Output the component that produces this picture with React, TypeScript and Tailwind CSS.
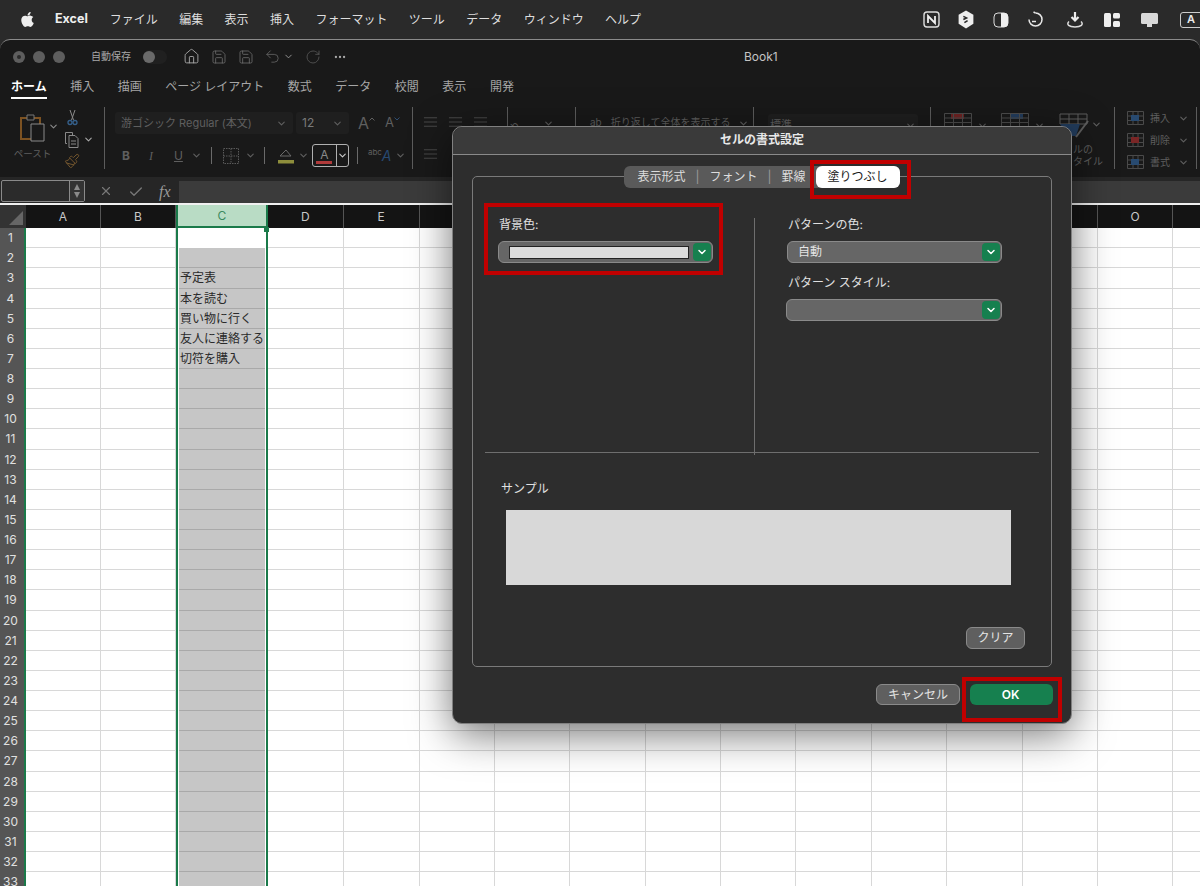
import { ChevronDown, Check, Ellipsis, House, Paintbrush, RotateCw, Save, Undo2, X } from "lucide-react";
import { FaApple } from "react-icons/fa";

const font = "font-['Inter','Noto_Sans_CJK_JP',sans-serif]";
const menus = ["ファイル", "編集", "表示", "挿入", "フォーマット", "ツール", "データ", "ウィンドウ", "ヘルプ"];
const tabs = ["挿入", "描画", "ページ レイアウト", "数式", "データ", "校閲", "表示", "開発"];
const columns = ["A", "B", "C", "D", "E", "F", "G", "H", "I", "J", "K", "L", "M", "N", "O", ""];
const rows = Array.from({ length: 33 }, (_, i) => i + 1);
const cellText: Record<number, string> = { 3: "予定表", 4: "本を読む", 5: "買い物に行く", 6: "友人に連絡する", 7: "切符を購入" };

function MenuBar() {
  return (
    <div className="flex h-[39px] items-center bg-[#2a2a2a] pl-[19px] text-[12px] text-[#dedede]">
      <FaApple className="text-[17px] text-[#eeeeee]" />
      <span className="ml-[19px] text-[12.5px] font-bold text-[#eeeeee]">Excel</span>
      <div className="ml-[22px] flex gap-[21.4px]">
        {menus.map((m) => (
          <span key={m}>{m}</span>
        ))}
      </div>
      <StatusIcons />
    </div>
  );
}

function StatusIcons() {
  return (
    <div className="-mr-[12px] ml-auto flex items-center text-[#e8e8e8]">
      <svg className="h-[17px] w-[17px]" viewBox="0 0 17 17" fill="none">
        <rect x="1" y="1" width="15" height="15" rx="3" stroke="#dddddd" strokeWidth="1.4" />
        <path d="M5 12V5l7 7V5" stroke="#eeeeee" strokeWidth="1.8" />
      </svg>
      <svg className="ml-[17px] h-[19px] w-[18px]" viewBox="0 0 17 18">
        <path d="M8.5 .5 15.500 4.500v8.500l-7 4.500L1.500 13V4.500z" fill="#eeeeee" />
        <path d="M6 6l3 1.500L6 9m4 1-3 2" stroke="#2a2a2a" strokeWidth="1.500" fill="none" />
      </svg>
      <svg className="ml-[18px] h-[16px] w-[16px]" viewBox="0 0 16 16">
        <rect x="1" y="1" width="14" height="14" rx="4" fill="none" stroke="#dddddd" />
        <path d="M8 1h3a4 4 0 0 1 4 4v6a4 4 0 0 1-4 4H8z" fill="#eeeeee" />
      </svg>
      <svg className="ml-[18px] h-[17px] w-[17px]" viewBox="0 0 17 17" fill="none" stroke="#e8e8e8" strokeWidth="1.500">
        <path d="M8.500 2a6.500 6.500 0 1 1-6.500 6.500" />
        <path d="M8.500 2 6.500 1M5 10.500h4" />
      </svg>
      <svg className="ml-[22px] h-[18px] w-[18px]" viewBox="0 0 18 18" fill="none">
        <path d="M9 1v8M5.500 6 9 9.500 12.500 6" stroke="#eeeeee" strokeWidth="2.200" />
        <path d="M3 10.500c-3 3 0 5.500 6 5.500s9-2.500 6-5.500" stroke="#dddddd" strokeWidth="1.500" />
      </svg>
      <svg className="ml-[20px] h-[16px] w-[16px]" viewBox="0 0 16 16" fill="#eeeeee">
        <rect x="0" y="1" width="7" height="14" rx="1.500" />
        <rect x="9" y="1" width="7" height="5.500" rx="1.500" />
        <rect x="9" y="9" width="7" height="6" rx="1.500" />
      </svg>
      <svg className="ml-[21px] h-[16px] w-[17px]" viewBox="0 0 17 16" fill="#d8d8d8">
        <rect x="0" y="1" width="17" height="11" rx="1.500" />
        <rect x="6" y="12" width="5" height="3" />
      </svg>
      <span className="ml-[22px] flex h-[16px] w-[32px] items-center rounded-[3px] border border-[#cccccc] pl-[6px] text-[11px] font-semibold">
        A
      </span>
    </div>
  );
}

function TitleBar() {
  return (
    <div className="relative flex h-[33px] items-center pl-[13px] text-[#707070]">
      <span className="flex h-[12px] w-[12px] items-center justify-center rounded-full bg-[#5e5e5e]">
        <span className="h-[4px] w-[4px] rounded-full bg-[#2a2a2a]" />
      </span>
      <span className="ml-[8px] h-[12px] w-[12px] rounded-full bg-[#5e5e5e]" />
      <span className="ml-[8px] h-[12px] w-[12px] rounded-full bg-[#5e5e5e]" />
      <span className="ml-[26px] text-[10px] text-[#a8a8a8]">自動保存</span>
      <span className="ml-[12px] flex h-[14px] w-[24px] items-center rounded-full bg-[#202020]">
        <span className="h-[12px] w-[12px] rounded-full bg-[#6a6a6a]" />
      </span>
      <House className="ml-[16px] h-[17px] w-[17px] text-[#a8a8a8]" strokeWidth={1.3} />
      <Save className="ml-[11px] h-[16px] w-[16px]" strokeWidth={1.2} />
      <Save className="ml-[11px] h-[16px] w-[16px]" strokeWidth={1.2} />
      <Undo2 className="ml-[10px] h-[17px] w-[17px] text-[#5f5f5f]" strokeWidth={1.3} />
      <ChevronDown className="ml-[2px] h-[11px] w-[11px] text-[#9a9a9a]" strokeWidth={2} />
      <RotateCw className="ml-[11px] h-[16px] w-[16px] text-[#5a5a5a]" strokeWidth={1.2} />
      <Ellipsis className="ml-[12px] h-[14px] w-[14px] text-[#a8a8a8]" />
      <span className="absolute left-[744px] text-[12px] text-[#c4c4c4]">Book1</span>
    </div>
  );
}

function RibbonTabs() {
  return (
    <div className="flex h-[33px] gap-[23.5px] pl-[11px] pt-[5px] text-[12px] text-[#a6a6a6]">
      <span className="h-[21px] border-b-[2px] border-white font-semibold text-white">ホーム</span>
      {tabs.map((t) => (
        <span key={t}>{t}</span>
      ))}
    </div>
  );
}

function Sep({ className }: { className: string }) {
  return <span className={`h-[17px] w-px bg-[#6a6a6a] ${className}`} />;
}

function Chev({ className = "text-[#a8a8a8]" }: { className?: string }) {
  return <ChevronDown className={`h-[11px] w-[11px] shrink-0 ${className}`} strokeWidth={2.4} />;
}

function Lines({ className }: { className: string }) {
  return (
    <svg className={className} viewBox="0 0 16 12" stroke="#4c4c4c" strokeWidth="1">
      <path d="M1 1.500h14M1 6h14M1 10.500h14" />
    </svg>
  );
}

function GridIcon({ fill, x }: { fill: string; x: number }) {
  return (
    <svg className="h-[14px] w-[28px]" viewBox="0 0 28 14" fill="none">
      <rect x={x} y="0" width="13" height="6" fill={fill} />
      <path d="M.5.5h27v13H.5zM.5 5h27M.5 9.500h27M9.500.5v13M18.500.5v13" stroke="#4c4c4c" />
    </svg>
  );
}

function Ribbon() {
  return (
    <div className="flex h-[71px] text-[#5f5f5f]">
      <div className="my-[1px] flex h-[62px] w-[105px] border-r border-[#5c5c5c] pl-[13px]">
        <div className="flex w-[35px] flex-col items-center">
          <svg className="mt-[5px] h-[30px] w-[30px] shrink-0" viewBox="0 0 30 30" fill="none">
            <path d="M5 6h19v21H5z" stroke="#7c5222" strokeWidth="2" />
            <path d="M11 3h7v5h-7z" stroke="#777777" fill="#191919" />
            <path d="M15 12h13v17H15z" stroke="#8a8a8a" fill="#191919" />
          </svg>
          <span className="mt-[5px] whitespace-nowrap pl-[4px] text-[9.5px]">ペースト</span>
        </div>
        <Chev className="mt-[14px] text-[#8a8a8a]" />
        <div className="ml-[5px] flex flex-col items-start gap-[5px] pt-[2px]">
          <svg className="h-[17px] w-[17px]" viewBox="0 0 17 17" fill="none">
            <path d="M6 1l3.500 10M11 1 7.500 11" stroke="#8a8a8a" />
            <circle cx="6" cy="13.500" r="2" stroke="#35608c" strokeWidth="1.300" />
            <circle cx="11" cy="13.500" r="2" stroke="#35608c" strokeWidth="1.300" />
          </svg>
          <div className="flex items-center gap-[2px]">
            <svg className="h-[17px] w-[17px]" viewBox="0 0 17 17" fill="none" stroke="#8a8a8a">
              <path d="M3 12.500H1.500v-11h7V4" />
              <path d="M5 4.500h6l3 3v9H5zM7 10h5M7 13h5" />
            </svg>
            <Chev />
          </div>
          <Paintbrush className="h-[16px] w-[16px] text-[#7a5a30]" strokeWidth={1.4} />
        </div>
      </div>

      <div className="my-[1px] flex h-[62px] w-[308px] flex-col border-r border-[#5c5c5c] pl-[10px]">
        <div className="mt-[5px] flex h-[22px] items-center">
          <div className="flex h-[22px] w-[178px] items-center justify-between rounded-[3px] bg-[#1f1f1f] px-[6px] text-[11px]">
            <span>游ゴシック Regular (本文)</span>
            <Chev className="text-[#5f5f5f]" />
          </div>
          <div className="ml-[3px] flex h-[22px] w-[53px] items-center justify-between rounded-[3px] bg-[#1f1f1f] px-[6px] text-[12px]">
            <span className="text-[#7a7a7a]">12</span>
            <Chev className="text-[#5f5f5f]" />
          </div>
          <span className="ml-[9px] text-[16px]">A</span>
          <svg className="mb-[8px] h-[4px] w-[6px]" viewBox="0 0 6 4" fill="none" stroke="#5f5f5f">
            <path d="M.5 3.500 3 1l2.500 2.500" />
          </svg>
          <span className="ml-[10px] text-[13px]">A</span>
          <svg className="mb-[8px] h-[4px] w-[6px]" viewBox="0 0 6 4" fill="none" stroke="#2f4d70">
            <path d="M.5.500 3 3l2.500-2.500" />
          </svg>
        </div>
        <div className="mt-[10px] flex h-[23px] items-center pl-[7px] text-[12px]">
          <span className="font-bold">B</span>
          <span className="ml-[19px] font-['Liberation_Serif',serif] italic">I</span>
          <span className="ml-[21px] underline">U</span>
          <Chev className="ml-[8px]" />
          <Sep className="ml-[9px]" />
          <svg className="ml-[11px] h-[16px] w-[16px]" viewBox="0 0 16 16" fill="none" stroke="#5a5a5a" strokeDasharray="1.500 1">
            <path d="M.5.5h15v15H.5zM8 .5v15M.5 8h15" />
          </svg>
          <Chev className="ml-[6px]" />
          <Sep className="ml-[8px]" />
          <svg className="ml-[12px] h-[16px] w-[18px]" viewBox="0 0 18 16" fill="none">
            <path d="M3 8 9 2l5 6H3z" stroke="#6a6a6a" />
            <rect x="1" y="12" width="16" height="3.500" fill="#8e8e3c" />
          </svg>
          <Chev className="ml-[3px]" />
          <div className="ml-[3px] flex h-[23px] w-[37px] rounded-[3px] border border-[#b0b0b0]">
            <div className="flex w-[24px] flex-col items-center justify-end pb-[2px] text-[12px] leading-[13px] text-[#8a8a8a]">
              A
              <span className="h-[3px] w-[16px] bg-[#b03a3a]" />
            </div>
            <div className="flex flex-1 items-center justify-center border-l border-[#b0b0b0]">
              <Chev className="text-[#cccccc]" />
            </div>
          </div>
          <Sep className="ml-[8px]" />
          <span className="ml-[10px] -translate-y-[4px] text-[8px]">abc</span>
          <span className="text-[14px] italic text-[#284a70]">A</span>
          <Chev className="ml-[3px]" />
        </div>
      </div>

      <div className="my-[1px] flex h-[62px] w-[95px] flex-col gap-[20px] border-r border-[#5c5c5c] pl-[10px] pt-[9px]">
        <div className="flex gap-[10px]">
          <Lines className="h-[12px] w-[15px]" />
          <Lines className="h-[12px] w-[15px]" />
          <Lines className="h-[12px] w-[15px]" />
        </div>
        <Lines className="h-[12px] w-[15px]" />
      </div>
      <div className="my-[1px] flex h-[62px] w-[68px] border-r border-[#5c5c5c] pl-[13px] pt-[7px] text-[10px]">
        <span className="-rotate-45">ab</span>
        <Chev className="ml-[10px] mt-[4px]" />
      </div>
      <div className="my-[1px] flex h-[62px] w-[178px] gap-[9px] border-r border-[#5c5c5c] pl-[14px] pt-[8px] text-[10px]">
        <span>ab</span>
        <span className="whitespace-nowrap">折り返して全体を表示する</span>
        <Chev className="-ml-[1px] mt-[3px]" />
      </div>
      <div className="my-[1px] flex h-[62px] w-[177px] border-r border-[#5c5c5c] pl-[14px] pt-[7px]">
        <div className="flex h-[22px] w-[150px] items-center justify-between rounded-[3px] bg-[#1f1f1f] px-[2px] text-[11px]">
          <span>標準</span>
          <Chev className="text-[#5f5f5f]" />
        </div>
      </div>
      <div className="my-[1px] h-[62px] w-[184px] border-r border-[#5c5c5c]">
        <div className="ml-[13px] flex h-[36px] items-start pt-[6px]">
          <GridIcon fill="#6e2222" x={7} />
          <Chev className="ml-[5px] mt-[7px]" />
          <div className="ml-[13px]">
            <GridIcon fill="#223c5c" x={9} />
          </div>
          <Chev className="ml-[5px] mt-[7px]" />
          <svg className="ml-[14px] h-[29px] w-[32px]" viewBox="0 0 32 29" fill="none">
            <path d="M1 1h27v10H1zM1 6h27M10 1v10M19 1v10" stroke="#5c5c5c" />
            <path d="M1 11h20l-4 12h-8z" fill="#223c5c" />
            <path d="M29 8 17 24" stroke="#5c5c5c" strokeWidth="2" />
          </svg>
          <Chev className="mt-[6px]" />
        </div>
        <div className="ml-[142px] whitespace-nowrap text-[10px] leading-[12px]">
          <div>ルの</div>
          <div>タイル</div>
        </div>
      </div>
      <div className="my-[1px] flex h-[62px] w-[82px] flex-col gap-[8px] border-r border-[#5c5c5c] pl-[12px] pt-[4px] text-[10px]">
        {["挿入", "削除", "書式"].map((t, i) => (
          <div key={t} className="flex h-[14px] items-center">
            <svg className="h-[14px] w-[17px]" viewBox="0 0 17 14" fill="none" stroke="#4a4a4a">
              <path d="M.5.5h16v13H.5zM.5 5h16M.5 9.500h16M6 .5v13M11 .5v13" />
              <rect x="4" y="4" width="8" height="6" fill={i === 1 ? "#7a2626" : "#284a70"} stroke="none" />
            </svg>
            <span className="ml-[6px]">{t}</span>
            <Chev className="ml-[8px]" />
          </div>
        ))}
      </div>
    </div>
  );
}

function FormulaBar() {
  return (
    <div className="flex h-[28px] border-b-[2px] border-[#f0f0f0] bg-[#262626] pl-[1px] pt-[3px]">
      <div className="flex h-[22px] w-[84px] rounded-[2px] border border-[#8a8a8a] bg-[#2b2b2b]">
        <div className="flex-1" />
        <div className="flex w-[15px] flex-col items-center justify-center gap-[2px] border-l border-[#8a8a8a] bg-[#333333]">
          <span className="h-0 w-0 border-x-[3px] border-b-[6px] border-x-transparent border-b-[#8a8a8a]" />
          <span className="h-0 w-0 border-x-[3px] border-t-[6px] border-x-transparent border-t-[#8a8a8a]" />
        </div>
      </div>
      <X className="ml-[14px] mt-[4px] h-[14px] w-[14px] text-[#777777]" strokeWidth={2} />
      <Check className="ml-[15px] mt-[4px] h-[16px] w-[16px] text-[#777777]" strokeWidth={2} />
      <span className="ml-[15px] font-['Liberation_Serif',serif] text-[16px] italic text-[#9a9a9a]">fx</span>
      <div className="ml-[8px] mt-[1px] h-[22px] flex-1 bg-[#3b3b3b]" />
    </div>
  );
}

function Sheet() {
  return (
    <div className="grid auto-rows-[20.125px] grid-cols-[26px_75px_75px_92px_75.5px_76px_repeat(11,75.4px)] bg-white">
      <div className="flex h-[23px] items-end justify-end bg-[#333333] p-[3px]">
        <span className="h-0 w-0 border-b-[14px] border-l-[14px] border-b-[#666666] border-l-transparent" />
      </div>
      {columns.map((c, i) =>
        c === "C" ? (
          <div key={i} className="flex h-[23px] items-center justify-center border-x-2 border-b-2 border-[#1a7a4a] bg-[#b9dcc5] text-[12px] text-[#3d8a5f]">
            {c}
          </div>
        ) : (
          <div key={i} className="flex h-[23px] items-center justify-center border-r border-[#555555] bg-[#141414] text-[12px] text-[#c8c8c8]">
            {c}
          </div>
        ),
      )}
      {rows.map((r) => (
        <Row key={r} r={r} />
      ))}
    </div>
  );
}

function Row({ r }: { r: number }) {
  return (
    <>
      <div className="flex translate-y-[3px] items-center justify-center border-r-2 border-[#1a7a4a] bg-[#555555] pr-[3px] text-[12px] text-[#e0e0e0]">
        {r}
      </div>
      {columns.map((c, i) =>
        c === "C" ? (
          <div key={i} className="relative translate-y-[3px] border-x-2 border-[#1a7a4a] bg-white px-px">
            {r === 1 ? (
              <span className="absolute -right-[3px] -top-[1px] h-[5px] w-[5px] bg-[#1a7a4a]" />
            ) : (
              <div className="h-full whitespace-nowrap border-b border-[#a9a9a9] bg-[#c6c6c6] pl-px text-[12px] leading-[20px] text-[#2a2a2a]">
                {cellText[r]}
              </div>
            )}
          </div>
        ) : (
          <div key={i} className="translate-y-[3px] border-b border-r border-[#d8d8d8]" />
        ),
      )}
    </>
  );
}

function GreenChevron() {
  return (
    <span className="ml-auto flex h-[18px] w-[18px] items-center justify-center rounded-[4px] bg-[#16804f]">
      <ChevronDown className="h-[12px] w-[12px] text-white" strokeWidth={3} />
    </span>
  );
}

function SelectBox({ children, width = "w-[215px]" }: { children?: React.ReactNode; width?: string }) {
  return (
    <div className={`mt-[10px] flex h-[22px] items-center rounded-[6px] border border-[#8a8a8a] bg-[#666666] pl-[10px] pr-[1px] text-[12px] text-[#e4e4e4] ${width}`}>
      {children}
      <GreenChevron />
    </div>
  );
}

function FormatDialog() {
  return (
    <div className="absolute left-[452px] top-[126px] flex h-[598px] w-[620px] flex-col rounded-[10px] border border-[#808080] bg-[#2d2d2d] text-[12px] text-[#e0e0e0] shadow-[0_10px_40px_rgba(0,0,0,0.55)]">
      <div className="flex h-[28px] items-center justify-center rounded-t-[10px] border-b border-[#8a8a8a] bg-[#3a3a3a] pb-[2px] font-semibold text-[#e8e8e8]">
        セルの書式設定
      </div>
      <div className="mx-[19px] mt-[21px] flex h-[491px] flex-col rounded-[5px] border border-[#7a7a7a]">
        <div className="-mt-[11px] flex justify-center">
          <div className="flex h-[22px] items-center rounded-[6px] bg-[#5a5a5a] pl-[13px] text-[#dddddd]">
            <span>表示形式</span>
            <span className="mx-[10px] text-[#9a9a9a]">|</span>
            <span>フォント</span>
            <span className="mx-[10px] text-[#9a9a9a]">|</span>
            <span>罫線</span>
            <span className="ml-[10px] flex h-[22px] w-[84px] items-center justify-center rounded-[6px] bg-white text-[#1a1a1a]">
              塗りつぶし
            </span>
          </div>
        </div>
        <div className="mt-[30px] flex h-[237px]">
          <div className="w-[282px] border-r border-[#6e6e6e] pl-[25px] leading-[12px]">
            <div className="pl-[1px] pt-[1px]">背景色:</div>
            <SelectBox>
              <span className="h-[13px] w-[180px] border border-[#222222] bg-[#dcdcdc]" />
            </SelectBox>
          </div>
          <div className="flex-1 pl-[32px] leading-[12px]">
            <div className="pl-[1px] pt-[1px]">パターンの色:</div>
            <SelectBox>自動</SelectBox>
            <div className="mt-[14px] pl-[1px]">パターン スタイル:</div>
            <SelectBox width="w-[216px] -ml-[1px]" />
          </div>
        </div>
        <div className="mx-[12px] -mt-[3px] h-px bg-[#6e6e6e]" />
        <div className="ml-[28px] mt-[30px] leading-[12px]">サンプル</div>
        <div className="ml-[33px] mt-[15px] h-[75px] w-[505px] bg-[#d8d8d8]" />
        <button className="mr-[26px] mt-[42px] flex h-[22px] w-[59px] items-center justify-center self-end rounded-[6px] border border-[#8a8a8a] bg-[#5f5f5f] text-[#e4e4e4]">
          クリア
        </button>
      </div>
      <div className="mt-[17px] flex justify-end gap-[10px] pr-[18px]">
        <button className="flex h-[21px] w-[84px] items-center justify-center rounded-[6px] border border-[#8a8a8a] bg-[#5f5f5f] text-[#e4e4e4]">
          キャンセル
        </button>
        <button className="flex h-[21px] w-[83px] items-center justify-center rounded-[6px] bg-[#16804f] pr-[2px] font-semibold text-white">
          OK
        </button>
      </div>
      <div className="absolute left-[31px] top-[76px] h-[72px] w-[239px] border-[4px] border-[#c00000]" />
      <div className="absolute left-[357px] top-[33px] h-[39px] w-[101px] border-[4px] border-[#c00000]" />
      <div className="absolute left-[509px] top-[550px] h-[45px] w-[100px] border-[4px] border-[#c00000]" />
    </div>
  );
}

export default function App() {
  return (
    <div className={`relative h-[886px] w-[1200px] overflow-hidden bg-[#2a2a2a] ${font}`}>
      <MenuBar />
      <div className="overflow-hidden rounded-t-[10px] border-t border-[#8a8a8a] bg-[#191919]">
        <TitleBar />
        <RibbonTabs />
        <Ribbon />
        <FormulaBar />
        <Sheet />
      </div>
      <FormatDialog />
    </div>
  );
}
